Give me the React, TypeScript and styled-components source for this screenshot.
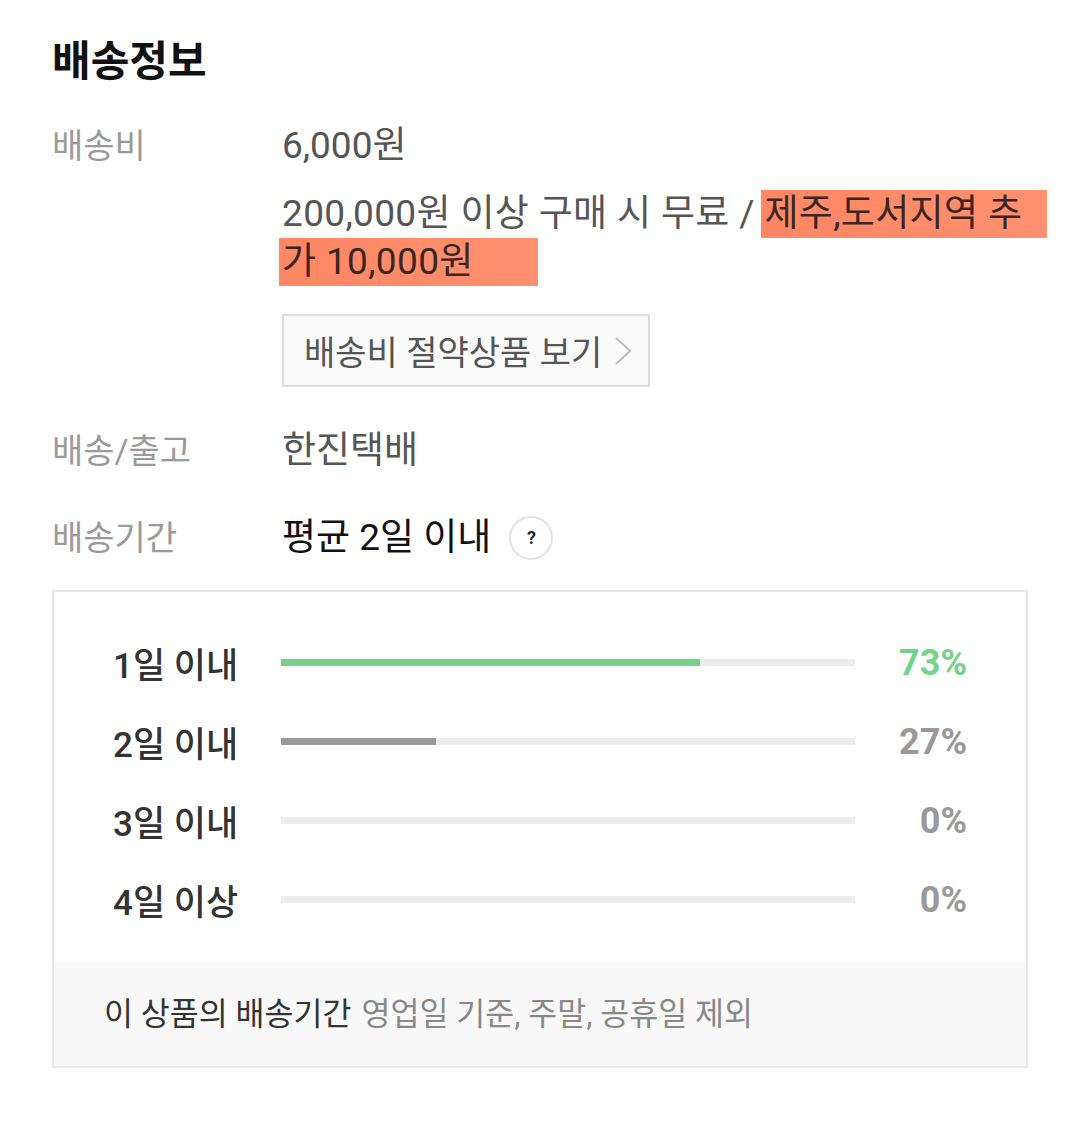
import * as React from 'react'
import styled, {createGlobalStyle} from 'styled-components'

const GlobalStyle = createGlobalStyle`
  body {
    margin: 0;
    background: #fff;
    font-family: Roboto, "Noto Sans CJK KR", sans-serif;
  }
`

const Page = styled.div`
  width: 1080px;
  box-sizing: border-box;
  padding: 35px 52px 40px;
`

const Title = styled.h2`
  margin: 0 0 33px;
  font-size: 42px;
  line-height: 54px;
  font-weight: 700;
  color: #111;
`

const InfoRow = styled.div`
  display: grid;
  grid-template-columns: 230px 1fr;
  margin-bottom: ${(p: {gap?: number}) => p.gap ?? 0}px;
`

const Label = styled.div`
  font-size: 34px;
  line-height: 48px;
  color: #9a9a9a;
`

const Value = styled.div`
  font-size: 37px;
  line-height: 48px;
  color: ${(p: {dark?: boolean}) => (p.dark ? '#111' : '#555')};
  display: flex;
  align-items: center;
`

const ValueBlock = styled.div`
  display: flex;
  flex-direction: column;
  align-items: flex-start;
`

const FeeText = styled.p`
  margin: 20px 0 0;
  font-size: 37px;
  line-height: 48px;
  color: #555;
  letter-spacing: 0.35px;
  white-space: nowrap;
`

const Highlight = styled.span`
  background: linear-gradient(90deg, #ff8763, #ff9070);
  color: #3a2520;
  padding: 2px ${(p: {pad: number}) => p.pad}px 3px 3px;
  margin-left: -3px;
`

const SaveButton = styled.button`
  margin-top: 28px;
  height: 73px;
  box-sizing: border-box;
  padding: 0 16px 0 20px;
  border: 2px solid #dcdcdc;
  background: #fafafa;
  display: flex;
  align-items: center;
  gap: 12px;
  font-family: inherit;
  font-size: 34px;
  color: #555;
`

const HelpIcon = styled.span`
  margin-left: 18px;
  width: 40px;
  height: 40px;
  border-radius: 50%;
  border: 2px solid #e2e2e2;
  display: inline-flex;
  align-items: center;
  justify-content: center;
  font-size: 18px;
  font-weight: 700;
  color: #222;
`

const StatsBox = styled.div`
  margin-top: 28px;
  border: 2px solid #e8e8e8;
`

const StatsList = styled.div`
  padding: 31px 59px 23px;
`

const StatRow = styled.div`
  display: grid;
  grid-template-columns: 168px 574px 1fr;
  align-items: center;
  height: 79px;
`

const StatLabel = styled.div`
  font-size: 35px;
  font-weight: 500;
  color: #333;
`

const Track = styled.div`
  height: 7px;
  background: #ececec;
`

const Fill = styled.div`
  height: 100%;
  background: ${(p: {color: string}) => p.color};
`

const Percent = styled.div`
  text-align: right;
  font-size: 36px;
  font-weight: 700;
  color: ${(p: {color: string}) => p.color};
`

const Footer = styled.div`
  background: #f9f9f9;
  height: 104px;
  display: flex;
  align-items: center;
  padding: 0 0 6px 50px;
  box-sizing: border-box;
  font-size: 31.5px;
  color: #888;
`

const FooterStrong = styled.span`
  color: #333;
  margin-right: 10px;
`

const stats = [
  {label: '1일 이내', value: 73, color: '#74d28a'},
  {label: '2일 이내', value: 27, color: '#999'},
  {label: '3일 이내', value: 0, color: '#999'},
  {label: '4일 이상', value: 0, color: '#999'},
]

const Chevron = () => (
  <svg width="18" height="30" viewBox="0 0 18 30">
    <path d="M2 2 L16 15 L2 28" fill="none" stroke="#bdbdbd" strokeWidth="2" />
  </svg>
)

export default function App() {
  return (
    <Page>
      <GlobalStyle />
      <Title>배송정보</Title>

      <InfoRow gap={40}>
        <Label>배송비</Label>
        <ValueBlock>
          <Value>6,000원</Value>
          <FeeText>
            200,000원 이상 구매 시 무료 / <Highlight pad={25}>제주,도서지역 추</Highlight>
            <br />
            <Highlight pad={64}>가 10,000원</Highlight>
          </FeeText>
          <SaveButton>
            배송비 절약상품 보기
            <Chevron />
          </SaveButton>
        </ValueBlock>
      </InfoRow>

      <InfoRow gap={39}>
        <Label>배송/출고</Label>
        <Value>한진택배</Value>
      </InfoRow>

      <InfoRow>
        <Label>배송기간</Label>
        <Value dark>
          평균 2일 이내
          <HelpIcon>?</HelpIcon>
        </Value>
      </InfoRow>

      <StatsBox>
        <StatsList>
          {stats.map(s => (
            <StatRow key={s.label}>
              <StatLabel>{s.label}</StatLabel>
              <Track>
                <Fill color={s.color} style={{width: `${s.value}%`}} />
              </Track>
              <Percent color={s.color}>{s.value}%</Percent>
            </StatRow>
          ))}
        </StatsList>
        <Footer>
          <FooterStrong>이 상품의 배송기간</FooterStrong>
          영업일 기준, 주말, 공휴일 제외
        </Footer>
      </StatsBox>
    </Page>
  )
}
